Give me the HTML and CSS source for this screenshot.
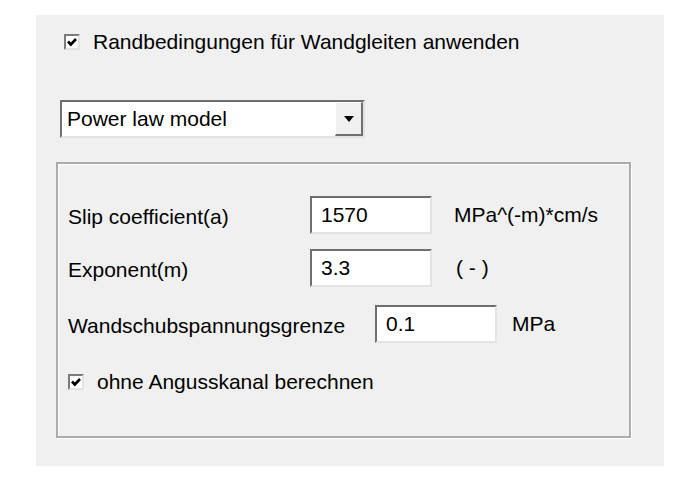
FILE: index.html
```html
<!DOCTYPE html>
<html lang="de">

<head>
  <meta charset="UTF-8">
  <meta name="viewport" content="width=device-width, initial-scale=1.0">
  <title>Wandgleiten</title>
  <link rel="stylesheet" href="styles.css">
</head>

<body>
  <div class="panel">
    <label class="check top-check">
      <span class="box"><svg width="12" height="12" viewBox="0 0 12 12"><path d="M2 5.5 L4.8 8.5 L10 3" fill="none" stroke="#000" stroke-width="2.6"/></svg></span>
      <span>Randbedingungen für Wandgleiten anwenden</span>
    </label>

    <div class="combo">
      <span class="combo-text">Power law model</span>
      <span class="combo-btn"><svg width="10" height="6" viewBox="0 0 10 6"><path d="M0 0 H10 L5 6 Z" fill="#000"/></svg></span>
    </div>

    <div class="group">
      <div class="row">
        <span class="label fixed">Slip coefficient(a)</span>
        <input class="field" type="text" value="1570">
        <span class="unit u1">MPa^(-m)*cm/s</span>
      </div>
      <div class="row row2">
        <span class="label fixed">Exponent(m)</span>
        <input class="field" type="text" value="3.3">
        <span class="unit u2">( - )</span>
      </div>
      <div class="row row3">
        <span class="label">Wandschubspannungsgrenze</span>
        <input class="field" type="text" value="0.1">
        <span class="unit u3">MPa</span>
      </div>
      <label class="check inner-check">
        <span class="box"><svg width="12" height="12" viewBox="0 0 12 12"><path d="M2 5.5 L4.8 8.5 L10 3" fill="none" stroke="#000" stroke-width="2.6"/></svg></span>
        <span>ohne Angusskanal berechnen</span>
      </label>
    </div>
  </div>
</body>

</html>
```

FILE: styles.css
```css
body {
  margin: 0;
  background-color: #fff;
  font-family: "Liberation Sans", Arial, sans-serif;
  font-size: 21px;
  color: #000;
}

.panel {
  box-sizing: border-box;
  width: 628px;
  height: 451px;
  margin: 15px 0 0 36px;
  padding: 19px 0 0 24px;
  background-color: #f0f0f0;
}

.check {
  display: flex;
  align-items: center;
  height: 16px;
}

.top-check {
  margin-left: 4px;
  gap: 13px;
}

.box {
  box-sizing: border-box;
  width: 16px;
  height: 16px;
  display: flex;
  align-items: center;
  justify-content: center;
  background-color: #fff;
  border: 2px solid;
  border-color: #7a7a7a #e3e3e3 #e3e3e3 #7a7a7a;
}

.combo {
  box-sizing: border-box;
  display: flex;
  align-items: center;
  width: 305px;
  height: 38px;
  margin-top: 50px;
  background-color: #fff;
  border: 2px solid;
  border-color: #6f6f6f #e3e3e3 #e3e3e3 #6f6f6f;
}

.combo-text {
  flex: 1;
  padding-left: 5px;
}

.combo-btn {
  box-sizing: border-box;
  width: 28px;
  height: 34px;
  display: flex;
  align-items: center;
  justify-content: center;
  background-color: #f0f0f0;
  border-right: 2px solid #6f6f6f;
  border-bottom: 2px solid #6f6f6f;
  border-top: 1px solid #fff;
  border-left: 1px solid #fff;
}

.group {
  box-sizing: border-box;
  width: 575px;
  height: 276px;
  margin: 24px 0 0 -4px;
  padding: 32px 0 0 10px;
  border: 2px solid #acacac;
  box-shadow: 1px 1px 0 #fff, inset 1px 1px 0 #fff;
}

.row {
  display: flex;
  align-items: center;
  height: 38px;
}

.row .label {
  padding-top: 3px;
}

.row2 {
  margin-top: 15px;
}

.row3 {
  margin-top: 18px;
}

.label.fixed {
  width: 242px;
}

.row3 .label {
  margin-right: 30px;
}

.field {
  box-sizing: border-box;
  width: 122px;
  height: 38px;
  margin: 0;
  padding: 0 0 0 9px;
  font-family: inherit;
  font-size: 21px;
  color: #000;
  background-color: #fff;
  border: 2px solid;
  border-color: #6f6f6f #e3e3e3 #e3e3e3 #6f6f6f;
  outline: none;
}

.u1 {
  margin-left: 22px;
}

.u2 {
  margin-left: 24px;
}

.u3 {
  margin-left: 15px;
}

.inner-check {
  margin-top: 31px;
  gap: 13px;
}
```
